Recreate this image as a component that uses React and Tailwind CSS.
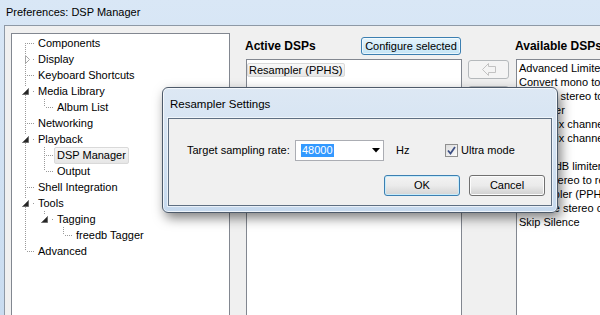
import React from 'react';

// tree rows: level, expander, vertical line above/below, ancestor lines
const TREE = [
  { label: 'Components', level: 0, top: false, below: true, anc: [] },
  { label: 'Display', level: 0, exp: 'closed', top: true, below: true, anc: [] },
  { label: 'Keyboard Shortcuts', level: 0, top: true, below: true, anc: [] },
  { label: 'Media Library', level: 0, exp: 'open', top: true, below: true, anc: [] },
  { label: 'Album List', level: 1, top: true, below: false, anc: [true] },
  { label: 'Networking', level: 0, top: true, below: true, anc: [] },
  { label: 'Playback', level: 0, exp: 'open', top: true, below: true, anc: [] },
  { label: 'DSP Manager', level: 1, top: true, below: true, anc: [true], selected: true },
  { label: 'Output', level: 1, top: true, below: false, anc: [true] },
  { label: 'Shell Integration', level: 0, top: true, below: true, anc: [] },
  { label: 'Tools', level: 0, exp: 'open', top: true, below: true, anc: [] },
  { label: 'Tagging', level: 1, exp: 'open', top: true, below: false, anc: [true] },
  { label: 'freedb Tagger', level: 2, top: true, below: false, anc: [true, false] },
  { label: 'Advanced', level: 0, top: true, below: false, anc: [] },
];

const AVAILABLE = [
  'Advanced Limiter',
  'Convert mono to stereo',
  'Convert stereo to 4 channels',
  'Equalizer',
  'Downmix channels to mono',
  'Downmix channels to stereo',
  'Fader',
  'Hard -6dB limiter',
  'Move stereo to rear channels',
  'Resampler (PPHS)',
  'Reverse stereo channels',
  'Skip Silence',
];

const DOT = { stroke: '#9a9a9a', strokeWidth: 1, strokeDasharray: '1 1' };

function Guide({ pass, own, exp, top, below }) {
  return (
    <svg width="19" height="16" className="shrink-0">
      {pass && <line x1="9.5" y1="0" x2="9.5" y2="16" {...DOT} />}
      {own && (
        <>
          {top && <line x1="9.5" y1="0" x2="9.5" y2={exp ? 4 : 8} {...DOT} />}
          {below && <line x1="9.5" y1={exp ? 12 : 8} x2="9.5" y2="16" {...DOT} />}
          <line x1={exp ? 17 : 11} y1="8.5" x2="19" y2="8.5" {...DOT} />
          {exp === 'closed' && <path d="M9.5 4.5 L13.5 8.5 L9.5 12.5 Z" fill="#fff" stroke="#a6a6a6" />}
          {exp === 'open' && <path d="M12.5 5.5 L12.5 11.5 L6.5 11.5 Z" fill="#262626" stroke="#6b6b6b" />}
        </>
      )}
    </svg>
  );
}

function TreeRow({ row }) {
  const cells = [];
  for (let i = 0; i < row.level; i++) cells.push(<Guide key={i} pass={row.anc[i]} />);
  cells.push(<Guide key="own" own exp={row.exp} top={row.top} below={row.below} />);
  return (
    <div className="flex h-[16px] items-center">
      {cells}
      <span
        className={
          row.selected
            ? 'h-[17px] px-[2px] flex items-center rounded-[2px] border border-[#d9d9d9] bg-gradient-to-b from-[#f8f8f8] to-[#e6e6e6]'
            : 'px-[2px] border border-transparent'
        }
      >
        {row.label}
      </span>
    </div>
  );
}

function ArrowButton({ dir }) {
  return (
    <div className="w-[41px] h-[19px] rounded-[3px] border border-[#b5b9bc] bg-[#f4f4f4] flex items-center justify-center">
      <svg width="16" height="13" viewBox="0 0 16 13">
        {dir === 'left' ? (
          <path d="M1.5 6.5 L7.5 0.5 L7.5 3.5 L14.5 3.5 L14.5 9.5 L7.5 9.5 L7.5 12.5 Z" fill="none" stroke="#c2c2c2" />
        ) : (
          <path d="M14.5 6.5 L8.5 0.5 L8.5 3.5 L1.5 3.5 L1.5 9.5 L8.5 9.5 L8.5 12.5 Z" fill="none" stroke="#c2c2c2" />
        )}
      </svg>
    </div>
  );
}

function ResamplerDialog() {
  return (
    <div className="absolute left-[162px] top-[87px] w-[396px] h-[126px] rounded-[6px] border border-[#4d5a6a] bg-gradient-to-b from-[#dde8f4] via-[#d3e2f2] to-[#c6d9ee] shadow-[3px_5px_12px_rgba(0,0,0,0.5),inset_0_0_0_1px_rgba(255,255,255,0.7)] flex flex-col">
      <div className="h-[30px] pl-[7px] pt-[3px] flex items-center text-[11.5px] text-black">Resampler Settings</div>
      <div className="flex-1 mx-[5px] mb-[6px] border border-[#5f6f82] bg-[#f0f0f0] shadow-[0_0_0_1px_rgba(255,255,255,0.6)] flex flex-col">
        <div className="mt-[21px] pl-[18px] h-[21px] flex items-center">
          <span className="w-[108px]">Target sampling rate:</span>
          <div className="w-[89px] h-[21px] border border-[#abadb3] bg-white flex items-center justify-between pl-[5px] pr-[3px]">
            <span className="h-[13px] px-[1px] flex items-center bg-[#3399ff] text-white">48000</span>
            <svg width="8" height="5" viewBox="0 0 8 5">
              <path d="M0 0 L8 0 L4 4.5 Z" fill="#000" />
            </svg>
          </div>
          <span className="ml-[12px] w-[49px]">Hz</span>
          <div className="w-[13px] h-[13px] border border-[#8f8f8f] bg-gradient-to-br from-[#dcdcdc] to-[#fbfbfb] flex items-center justify-center">
            <svg width="9" height="9" viewBox="0 0 9 9">
              <path d="M1 4.5 L3.5 7.5 L8 1" fill="none" stroke="#3d4f84" strokeWidth="1.8" />
            </svg>
          </div>
          <span className="ml-[3px]">Ultra mode</span>
        </div>
        <div className="mt-[14px] pr-[6px] flex justify-end gap-[9px]">
          <div className="w-[76px] h-[21px] rounded-[3px] border border-[#3c7fb1] bg-gradient-to-b from-[#f3f3f3] via-[#ebebeb] to-[#d4d4d4] shadow-[inset_0_0_0_1px_#c8ecfb] flex items-center justify-center">OK</div>
          <div className="w-[76px] h-[21px] rounded-[3px] border border-[#707070] bg-gradient-to-b from-[#f2f2f2] via-[#ebebeb] to-[#cfcfcf] shadow-[inset_0_0_0_1px_#fcfcfc] flex items-center justify-center">Cancel</div>
        </div>
      </div>
    </div>
  );
}

export default function App() {
  return (
    <div className="relative w-[600px] h-[315px] overflow-hidden flex flex-col bg-gradient-to-b from-[#d9e7f6] to-[#c9dcf0] font-['Liberation_Sans',Arial,sans-serif] text-[11px] text-black">
      <div className="h-[25px] shrink-0 pl-[6px] flex items-center text-[11px]">Preferences: DSP Manager</div>

      <div className="flex-1 ml-[4px] border-l border-t border-[#8e99a6] bg-[#f0f0f0] flex pl-[6px] pt-[7px]">
        {/* tree */}
        <div className="w-[219px] h-[300px] shrink-0 border border-[#828790] bg-white pt-[1px] pl-[4px]">
          {TREE.map((r) => (
            <TreeRow key={r.label} row={r} />
          ))}
        </div>

        {/* active dsps */}
        <div className="ml-[16px] w-[216px] shrink-0 flex flex-col">
          <div className="h-[26px] flex items-center justify-between">
            <span className="-ml-[1px] text-[12px] font-bold">Active DSPs</span>
            <div className="mr-[1px] w-[100px] h-[18px] rounded-[3px] border border-[#3c7fb1] bg-gradient-to-b from-[#e5f4fc] to-[#c4e5f6] shadow-[inset_0_0_0_1px_rgba(255,255,255,0.6)] flex items-center justify-center">
              Configure selected
            </div>
          </div>
          <div className="h-[300px] border border-[#828790] bg-white pt-[2px]">
            <div className="inline-flex h-[14px] items-center px-[1px] rounded-[2px] border border-[#d9d9d9] bg-gradient-to-b from-[#f8f8f8] to-[#e6e6e6]">
              Resampler (PPHS)
            </div>
          </div>
        </div>

        {/* arrows */}
        <div className="w-[54px] shrink-0 pt-[27px] pl-[6px] flex flex-col gap-[7px]">
          <ArrowButton dir="left" />
          <ArrowButton dir="right" />
        </div>

        {/* available dsps */}
        <div className="flex-1 flex flex-col">
          <div className="h-[26px] flex items-center">
            <span className="-ml-[1px] text-[12px] font-bold whitespace-nowrap">Available DSPs</span>
          </div>
          <div className="h-[300px] border-l border-t border-[#828790] bg-white pt-[1px] pl-[2px]">
            {AVAILABLE.map((a) => (
              <div key={a} className="h-[14px] flex items-center whitespace-nowrap">
                {a}
              </div>
            ))}
          </div>
        </div>
      </div>

      <ResamplerDialog />
    </div>
  );
}
